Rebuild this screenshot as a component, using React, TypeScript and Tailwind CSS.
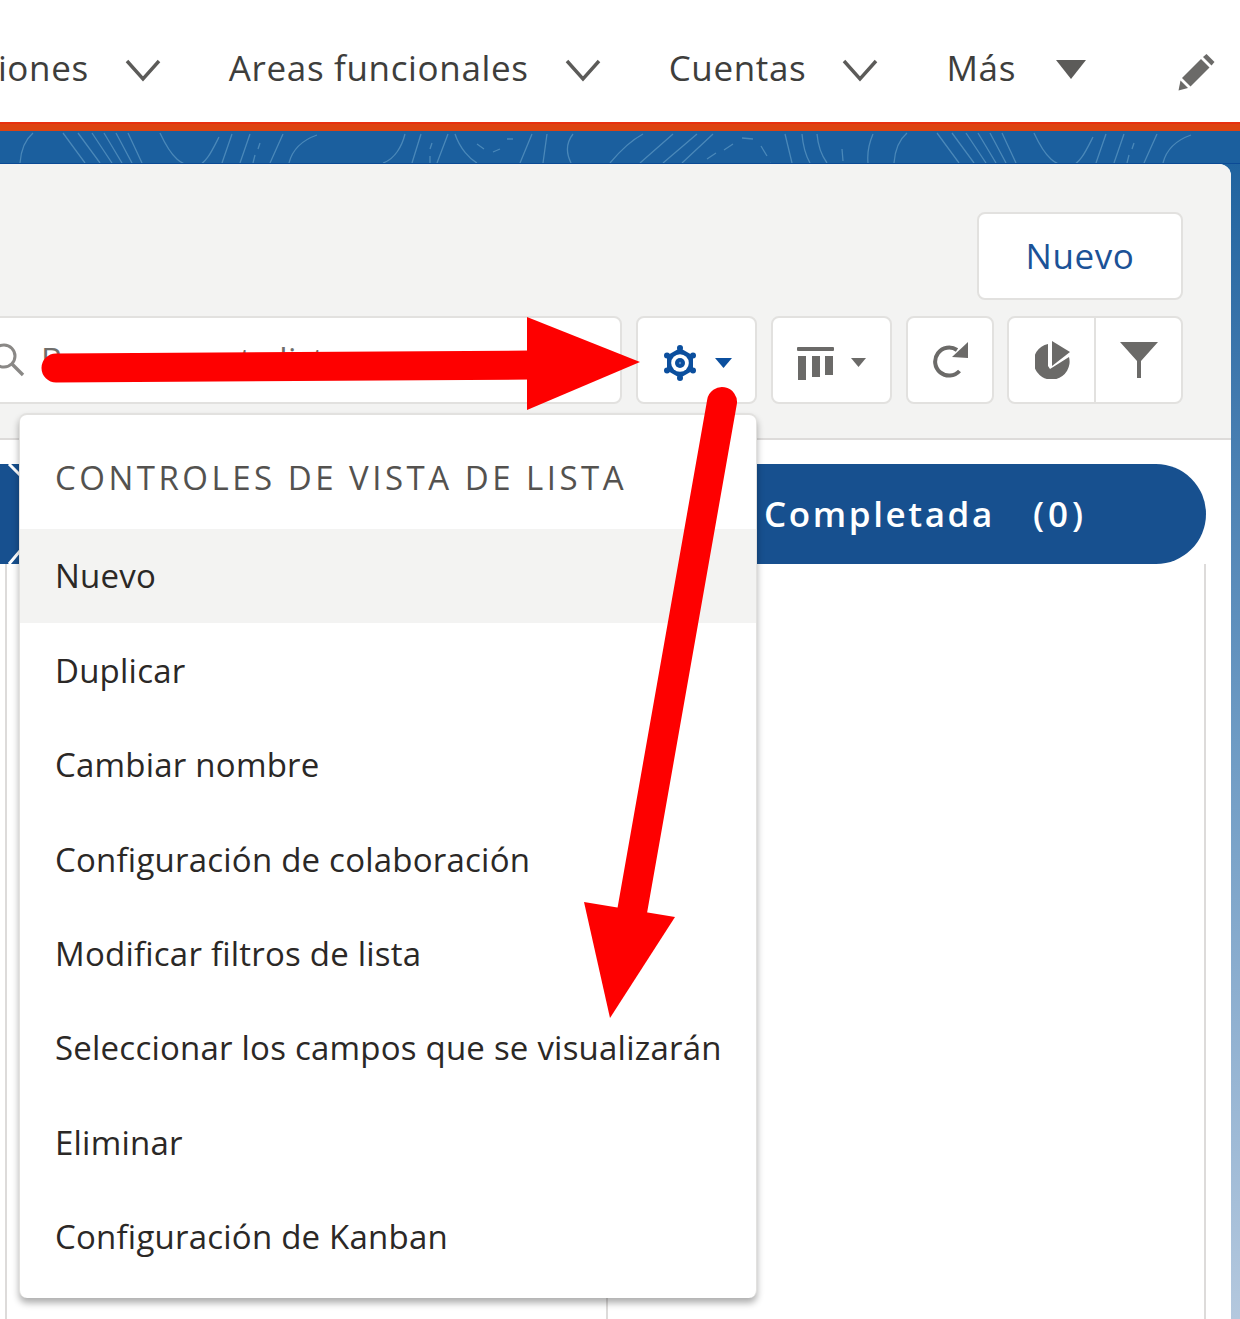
import { ReactNode } from "react";

const menuItems = [
  "Nuevo",
  "Duplicar",
  "Cambiar nombre",
  "Configuración de colaboración",
  "Modificar filtros de lista",
  "Seleccionar los campos que se visualizarán",
  "Eliminar",
  "Configuración de Kanban",
];

const gearTeeth = [
  [18, 3],
  [31, 10.5],
  [31, 25.5],
  [18, 33],
  [5, 25.5],
  [5, 10.5],
];

function Chevron() {
  return (
    <svg width="36" height="24" viewBox="0 0 36 24" fill="none" className="mt-[4px] shrink-0">
      <path d="M2 3 L18 21 L34 3" stroke="#5c5b59" strokeWidth="3.4" />
    </svg>
  );
}

function NavItem({ label, gap = "ml-[68px]" }: { label: string; gap?: string }) {
  return (
    <div className={`flex items-center gap-[36px] shrink-0 ${gap}`}>
      <span>{label}</span>
      <Chevron />
    </div>
  );
}

function ToolButton({ className, children }: { className: string; children: ReactNode }) {
  return (
    <div
      className={`h-[88px] shrink-0 flex items-center justify-center bg-white border-2 border-[#e2e1df] rounded-[8px] ${className}`}
    >
      {children}
    </div>
  );
}

// background contour lines of the blue band, the drawing repeats every 874px
function BandPattern() {
  const lines = [
    "M20 32C21 18 26 8 33 2",
    "M63 2L85 32M78 2L100 32M92 2L112 32M104 2L122 32M116 2L132 32M128 2L142 32",
    "M160 2C172 28 182 35 195 35C205 35 212 20 219 6",
    "M222 32L232 3M240 32L250 3M253 32L255 24M258 18L260 12M270 32L283 3",
    "M289 32C292 20 300 10 317 4",
    "M383 32C395 28 402 15 405 3M412 32L421 3M430 32L430 25M430 18L432 12M437 32L448 3",
    "M455 3C460 18 470 28 477 32M477 13L484 18M493 21L500 18M507 8L513 8",
    "M520 32L532 3M543 32L547 3M571 32C566 22 566 12 573 3",
    "M610 32C620 20 630 10 643 3M640 32L673 3M663 32L697 3M682 32L713 3",
    "M707 28L716 22M724 19L733 13M742 7L753 8M761 15L767 25M770 32L773 34",
    "M785 3L792 32M802 3C803 15 806 25 810 32M817 3C818 15 822 25 827 32M842 18L843 30M868 32C867 22 870 10 873 3",
  ];
  return (
    <svg width="1240" height="33" viewBox="0 0 1240 33" fill="none" className="block">
      {[0, 874].map((offset) => (
        <g key={offset} transform={`translate(${offset} 0)`}>
          {lines.map((d) => (
            <path key={d} d={d} stroke="#4a88b9" strokeWidth="1.3" />
          ))}
        </g>
      ))}
    </svg>
  );
}

function Dropdown() {
  return (
    <div className="absolute left-[19px] top-[413px] w-[738px] bg-white rounded-[8px] border-t-2 border-x border-[#e2e1df] shadow-[0_5px_7px_rgba(0,0,0,0.32)] pb-[14px] text-[#2b2826]">
      <div className="h-[114px] flex items-center pl-[35px] pt-[11px] text-[#54524f] tracking-[3.5px] text-[33px] leading-none whitespace-nowrap">
        CONTROLES DE VISTA DE LISTA
      </div>
      {menuItems.map((item, i) => (
        <div
          key={item}
          className={`h-[94.4px] flex items-center pl-[35px] whitespace-nowrap text-[33px] tracking-[0.22px] ${i === 0 ? "bg-[#f3f3f2]" : ""}`}
        >
          {item}
        </div>
      ))}
    </div>
  );
}

export default function App() {
  return (
    <div className="relative w-[1240px] h-[1319px] overflow-hidden bg-white font-['Open_Sans',sans-serif]">
      {/* top nav */}
      <div className="h-[122px] flex items-center justify-end pt-[14px] pr-[23px] bg-white text-[35px] tracking-[0.65px] text-[#3e3e3c] whitespace-nowrap">
        <NavItem label="Publicaciones" gap="" />
        <NavItem label="Areas funcionales" />
        <NavItem label="Cuentas" />
        <div className="flex items-center gap-[40px] ml-[68px] shrink-0">
          <span>Más</span>
          <svg width="30" height="20" viewBox="0 0 30 20" className="mt-[2px] shrink-0">
            <path d="M0 1H30L15 20Z" fill="#5c5b59" />
          </svg>
        </div>
        <svg width="40" height="40" viewBox="0 0 37 40" className="ml-[91px] mt-[6px] shrink-0">
          <path d="M28 3L36 11L33 14.5L24.5 6Z" fill="#6b6a68" />
          <path d="M22.5 8L31 16.5L12 35.5L3.5 27Z" fill="#6b6a68" />
          <path d="M2 29.5L9.5 37L0 39.5Z" fill="#6b6a68" />
        </svg>
      </div>

      {/* accent bar + blue band */}
      <div className="h-[9px] bg-[#dd4311] border-t-2 border-[#e8300f]" />
      <div className="h-[33px] bg-[#1b5f9e] border-b border-[#0b4a95] overflow-hidden">
        <BandPattern />
      </div>

      {/* panel */}
      <div className="h-[1155px] flex bg-gradient-to-b from-[#1f639f] via-[#6e9bc4] to-[#b4c8de]">
        <div className="w-[1231px] rounded-tr-[12px] bg-white overflow-hidden flex flex-col">
          {/* list header */}
          <div className="h-[276px] shrink-0 bg-[#f3f3f2] border-b-2 border-[#dddbda] pt-[48px] pr-[48px] flex flex-col items-end gap-[16px]">
            <div className="w-[206px] h-[88px] flex items-center justify-center bg-white border-2 border-[#e2e1df] rounded-[8px] text-[35px] tracking-[0.6px] text-[#1b5297]">
              Nuevo
            </div>
            <div className="flex items-center">
              <div className="w-[640px] h-[88px] shrink-0 flex items-center bg-white border-2 border-[#e2e1df] rounded-[8px] text-[33px] tracking-[0.3px] text-[#706e6b] whitespace-nowrap mr-[14px]">
                <svg width="40" height="40" viewBox="0 0 40 40" className="shrink-0 ml-[2px]">
                  <circle cx="18" cy="16" r="11" fill="none" stroke="#8a8886" strokeWidth="3" />
                  <path d="M26 24L37 35" stroke="#8a8886" strokeWidth="3.4" />
                </svg>
                <span className="ml-[15px]">Buscar en esta lista...</span>
              </div>
              <ToolButton className="w-[121px] gap-[17px] mr-[14px]">
                <svg width="36" height="36" viewBox="0 0 36 36" className="mt-[6px] shrink-0">
                  <path d="M18 3L31 10.500V25.500L18 33L5 25.500V10.500Z" fill="#0b4f9e" />
                  {gearTeeth.map(([cx, cy]) => (
                    <circle key={`${cx}-${cy}`} cx={cx} cy={cy} r="3" fill="#0b4f9e" />
                  ))}
                  <circle cx="18" cy="18" r="8.800" fill="#ffffff" />
                  <circle cx="18" cy="18" r="5" fill="#0b4f9e" />
                  <circle cx="18" cy="18" r="1.200" fill="#5c8cc8" />
                </svg>
                <svg width="17" height="10" viewBox="0 0 17 10" className="mt-[5px] shrink-0">
                  <path d="M0 0H17L8.500 10Z" fill="#0b4f9e" />
                </svg>
              </ToolButton>
              <ToolButton className="w-[121px] gap-[17px] mr-[14px]">
                <svg width="37" height="33" viewBox="0 0 37 33" className="mt-[7px] shrink-0">
                  <rect x="0" y="0" width="37" height="4" rx="1" fill="#6b6a68" />
                  <rect x="1" y="9" width="8" height="24" fill="#6b6a68" />
                  <rect x="15" y="9" width="8" height="21" fill="#6b6a68" />
                  <rect x="28" y="9" width="8" height="19" fill="#6b6a68" />
                </svg>
                <svg width="15" height="9" viewBox="0 0 15 9" className="mt-[5px] shrink-0">
                  <path d="M0 0H15L7.500 9Z" fill="#6b6a68" />
                </svg>
              </ToolButton>
              <ToolButton className="w-[88px] mr-[13px]">
                <svg width="36" height="36" viewBox="0 0 36 36" fill="none" className="ml-[1px] shrink-0">
                  <path d="M26.500 29A14 14 0 1 1 24 8" stroke="#6b6a68" strokeWidth="4" />
                  <path d="M35 0V16L19 15Z" fill="#6b6a68" />
                </svg>
              </ToolButton>
              <div className="w-[176px] h-[88px] shrink-0 flex bg-white border-2 border-[#e2e1df] rounded-[8px]">
                <div className="w-[87px] flex items-center justify-center border-r-2 border-[#e2e1df]">
                  <svg width="36" height="38" viewBox="0 0 36 38" className="ml-[3px] shrink-0">
                    <path d="M13 3V25L15 28L34 16A18 18 0 1 1 13 3Z" fill="#6b6a68" />
                    <path d="M17 0L35 11L17 25Z" fill="#6b6a68" />
                  </svg>
                </div>
                <div className="flex-1 flex items-center justify-center">
                  <svg width="38" height="36" viewBox="0 0 38 36">
                    <path d="M0 0H38L21 19V36H17V19Z" fill="#6b6a68" />
                  </svg>
                </div>
              </div>
            </div>
          </div>

          {/* kanban */}
          <div className="flex-1 flex flex-col pt-[24px]">
            <div className="h-[100px] shrink-0 flex justify-between pr-[25px]">
              <svg width="20" height="100" viewBox="0 0 20 100" className="shrink-0">
                <rect width="20" height="100" fill="#17508f" />
                <path d="M9 0L20 11M9 100L20 87" stroke="#ffffff" strokeWidth="3" />
              </svg>
              <div className="w-[500px] h-full flex items-center pl-[58px] rounded-r-[50px] bg-[#17508f] text-white text-[35px] font-semibold tracking-[2.6px] whitespace-nowrap">
                <span>Completada</span>
                <span className="ml-[38px] tracking-[4px]">(0)</span>
              </div>
            </div>
            <div className="flex-1 flex">
              <div className="w-[601px] ml-[5px] border-l-2 border-[#dddbda]" />
              <div className="w-[600px] border-x-2 border-[#dddbda]" />
            </div>
          </div>
        </div>
      </div>

      <Dropdown />

      {/* red annotation arrows */}
      <svg width="1240" height="1319" viewBox="0 0 1240 1319" fill="none" className="absolute left-0 top-0 pointer-events-none">
        <path d="M56 368L530 365" stroke="#fe0000" strokeWidth="29" strokeLinecap="round" />
        <path d="M527 317L640 362L527 410Z" fill="#fe0000" />
        <path d="M722 402L632 912" stroke="#fe0000" strokeWidth="30" strokeLinecap="round" />
        <path d="M584 902L675 917L610 1018Z" fill="#fe0000" />
      </svg>
    </div>
  );
}
